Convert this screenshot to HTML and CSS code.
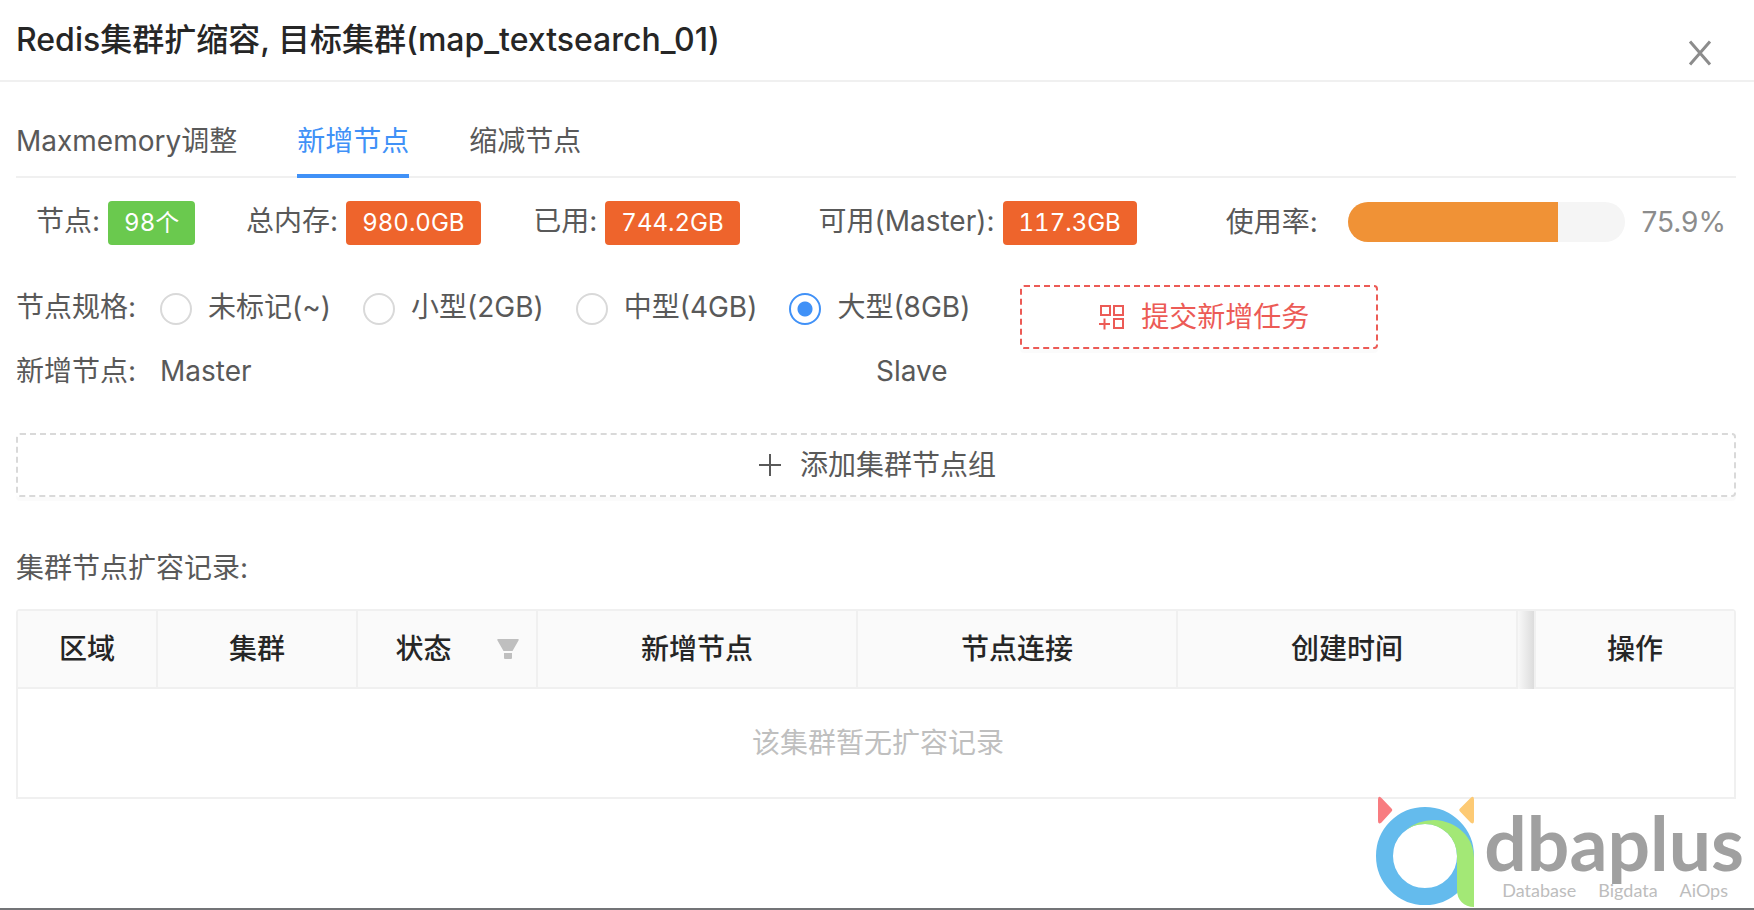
FILE: index.html
```html
<!DOCTYPE html>
<html lang="zh-CN">
<head>
<meta charset="utf-8">
<meta name="viewport" content="width=device-width, initial-scale=1">
<title>Redis集群扩缩容</title>
<link rel="stylesheet" href="styles.css">
</head>
<body>
<div class="drawer">
  <header class="drawer-header">
    <h1 class="drawer-title">Redis集群扩缩容, 目标集群(map_textsearch_01)</h1>
    <button class="close" type="button" aria-label="关闭">
      <svg width="24" height="26" viewBox="0 0 24 26" fill="none" stroke="currentColor" stroke-width="3"><path d="M2 1.500 22 24.500M22 1.500 2 24.500"/></svg>
    </button>
  </header>

  <main class="drawer-body">
    <nav class="tabs">
      <a class="tab" href="#maxmemory">Maxmemory调整</a>
      <a class="tab tab-active" href="#add" aria-current="page">新增节点</a>
      <a class="tab" href="#shrink">缩减节点</a>
    </nav>

    <section class="stats">
      <div class="stat"><span>节点:</span><span class="tag tag-green">98个</span></div>
      <div class="stat"><span>总内存:</span><span class="tag">980.0GB</span></div>
      <div class="stat"><span>已用:</span><span class="tag">744.2GB</span></div>
      <div class="stat"><span>可用(Master):</span><span class="tag">117.3GB</span></div>
      <div class="stat stat-usage">
        <span>使用率:</span>
        <div class="bar" role="progressbar" aria-label="使用率" aria-valuenow="75.9" aria-valuemin="0" aria-valuemax="100"><div class="bar-fill" style="width:75.9%"></div></div>
        <span class="percent">75.9%</span>
      </div>
    </section>

    <form class="spec">
      <div class="spec-options" role="radiogroup" aria-labelledby="size-label">
        <span class="field-label" id="size-label">节点规格:</span>
        <label class="option"><input class="radio" type="radio" name="size">未标记(~)</label>
        <label class="option"><input class="radio" type="radio" name="size">小型(2GB)</label>
        <label class="option"><input class="radio" type="radio" name="size">中型(4GB)</label>
        <label class="option"><input class="radio" type="radio" name="size" checked>大型(8GB)</label>
      </div>
      <button class="dashed submit" type="button">
        <svg width="28" height="28" viewBox="0 0 28 28" fill="none" stroke="currentColor" stroke-width="2"><path d="M4 3h9v9H4zM17 3h9v9h-9zM17 16h9v9h-9zM2 21h11M7.500 15.500v11"/></svg>
        提交新增任务
      </button>
    </form>

    <div class="nodes">
      <span class="field-label">新增节点:</span>
      <span>Master</span>
      <span>Slave</span>
    </div>

    <button class="dashed add-group" type="button">
      <svg width="28" height="28" viewBox="0 0 28 28" fill="none" stroke="currentColor" stroke-width="2"><path d="M3 14h22M14 3v22"/></svg>
      添加集群节点组
    </button>

    <h2 class="records-title">集群节点扩容记录:</h2>
    <table class="records">
      <colgroup>
        <col class="c-region"><col class="c-cluster"><col class="c-status"><col class="c-wide"><col class="c-wide"><col class="c-time"><col class="c-shadow"><col class="c-action">
      </colgroup>
      <thead>
        <tr>
          <th>区域</th>
          <th>集群</th>
          <th>
            <div class="filterable">
              <span class="filterable-name">状态</span>
              <button class="filter" type="button" aria-label="筛选状态"><svg width="22" height="22" viewBox="0 0 22 22" fill="currentColor"><path d="M1 1h20a1 1 0 0 1 .5 1.500L15.500 13h-9L.500 2.500A1 1 0 0 1 1 1zM7 15h8v5a1 1 0 0 1-1 1H8a1 1 0 0 1-1-1z"/></svg></button>
            </div>
          </th>
          <th>新增节点</th>
          <th>节点连接</th>
          <th>创建时间</th>
          <td class="shadow"></td>
          <th>操作</th>
        </tr>
      </thead>
      <tbody>
        <tr><td class="empty" colspan="8">该集群暂无扩容记录</td></tr>
      </tbody>
    </table>
  </main>

  <div class="brand">
    <svg class="brand-mark" width="98" height="112" viewBox="0 0 98 112">
      <path d="M2 3.500Q2-1 5.500 2L15.500 12.500Q17 14 15.500 15.500L5.500 26.500Q2 29 2 25z" fill="#f87c80"/>
      <path d="M98 3.500Q98-1 94.500 2L84 12.500Q82.500 14 84 15.500L94.500 26.500Q98 29 98 25z" fill="#fdca74"/>
      <circle cx="49" cy="60" r="40.500" fill="none" stroke="#64bbed" stroke-width="17"/>
      <path d="M30 34Q42 24 58 24C82 25 98 42 98 62V111C88 111 81 104 81 94V60A32 32 0 0 0 49 28Q38 28 30 34z" fill="#a3e876"/>
    </svg>
    <div class="brand-text">
      <span class="brand-name">dbaplus</span>
      <span class="brand-line"><span>Database</span><span>Bigdata</span><span>AiOps</span></span>
    </div>
  </div>
</div>
</body>
</html>
```
FILE: styles.css
```css
* { box-sizing: border-box; }

body {
  margin: 0;
  background: #fff;
  color: #595959;
  font: 28px/44px Inter, "Noto Sans CJK SC", sans-serif;
}

button {
  font: inherit;
  color: inherit;
  background: none;
  border: 0;
  padding: 0;
  cursor: pointer;
}

svg { display: block; flex: none; }

.drawer {
  position: relative;
  min-height: 100vh;
  border-bottom: 2px solid #737477;
}

.drawer-header {
  display: flex;
  justify-content: space-between;
  align-items: flex-start;
  padding: 16px 42px 14px 16px;
  border-bottom: 2px solid #f0f0f0;
}

.drawer-title {
  margin: 0;
  color: #262626;
  font-size: 32px;
  font-weight: 500;
  line-height: 48px;
}

.close { color: #8c8c8c; padding-top: 24px; }

.drawer-body { padding: 37px 18px 0 16px; }

.tabs {
  display: flex;
  gap: 60px;
  border-bottom: 2px solid #f0f0f0;
}

.tab {
  color: inherit;
  text-decoration: none;
  padding-bottom: 13px;
  margin-bottom: -2px;
}

.tab-active {
  color: #4091f7;
  padding-bottom: 11px;
  border-bottom: 4px solid #4091f7;
}

.stats {
  display: grid;
  grid-template-columns: 210fr 287fr 285fr 407fr 510fr;
  margin: 21px 0 0 20px;
}

.stat { display: flex; align-items: baseline; gap: 8px; white-space: nowrap; }

.tag {
  padding: 0 16px;
  border-radius: 4px;
  background: #ee642c;
  color: #fff;
  font-size: 24px;
  font-variant-numeric: tabular-nums;
}

.tag-green { background: #6ac94e; }

.stat-usage { align-items: center; gap: 16px; padding-right: 10px; }

.bar {
  flex: 1;
  height: 40px;
  margin-left: 14px;
  border-radius: 20px;
  background: #f5f5f5;
  overflow: hidden;
}

.bar-fill { height: 100%; background: #f09236; }

.percent { color: #8c8c8c; }

.spec {
  display: flex;
  gap: 50px;
  margin-top: 40px;
}

.spec-options {
  display: flex;
  align-items: flex-start;
  white-space: nowrap;
}

.field-label { width: 144px; }

.option {
  display: flex;
  align-items: center;
  gap: 16px;
  margin-right: 32px;
}

.option:last-child { margin-right: 0; }

.radio {
  appearance: none;
  width: 32px;
  height: 32px;
  margin: 4px 0 0;
  border: 2px solid #d9d9d9;
  border-radius: 50%;
  background: #fff;
}

.radio:checked {
  border-color: #4091f7;
  background: radial-gradient(circle, #4091f7 7px, #fff 8px);
}

.dashed {
  display: flex;
  justify-content: center;
  align-items: center;
  gap: 16px;
  height: 64px;
  border: 2px dashed #d9d9d9;
  border-radius: 4px;
  box-shadow: 0 4px 0 rgba(0, 0, 0, 0.016);
}

.submit {
  width: 358px;
  padding-left: 8px;
  border-color: #ec5b56;
  color: #ec5b56;
}

.nodes {
  display: grid;
  grid-template-columns: 144px 716fr 860fr;
}

.add-group { width: 100%; margin-top: 40px; }

.records-title {
  margin: 49px 0 19px;
  font-size: 28px;
  font-weight: 400;
}

.records {
  width: 100%;
  table-layout: fixed;
  border-collapse: separate;
  border-spacing: 0;
  border: 2px solid #f0f0f0;
  border-radius: 4px 4px 0 0;
}

.c-region { width: 140px; }
.c-cluster { width: 200px; }
.c-status { width: 180px; }
.c-wide { width: 320px; }
.c-shadow { width: 16px; }
.c-action { width: 200px; }

.records th {
  padding: 16px 0;
  border-right: 2px solid #f0f0f0;
  border-bottom: 2px solid #f0f0f0;
  background: #fafafa;
  color: #262626;
  font-weight: 500;
}

.records th:last-child { border-left: 2px solid #f0f0f0; border-right: 0; }

.shadow {
  padding: 0;
  background: linear-gradient(to right, #f8f8f8, #dcdcdc);
}

.filterable { display: flex; align-items: center; }
.filterable-name { flex: 1; padding-left: 8px; }
.filter { padding: 0 17px 0 16px; color: #bfbfbf; }

.empty {
  padding: 32px 0 32px 4px;
  color: #bfbfbf;
  text-align: center;
}

/* Watermark over the lower right corner */
.brand {
  position: absolute;
  right: 10px;
  bottom: 0;
  display: flex;
  gap: 10px;
}

.brand-text {
  display: flex;
  flex-direction: column;
  padding-top: 8px;
  font-family: Lato, sans-serif;
}

.brand-name {
  color: #a0a0a0;
  font-size: 75px;
  font-weight: 700;
  line-height: 76px;
}

.brand-line {
  display: flex;
  justify-content: space-between;
  padding: 0 16px 0 18px;
  color: #bdbdbd;
  font-size: 18px;
  line-height: 20px;
}
```
